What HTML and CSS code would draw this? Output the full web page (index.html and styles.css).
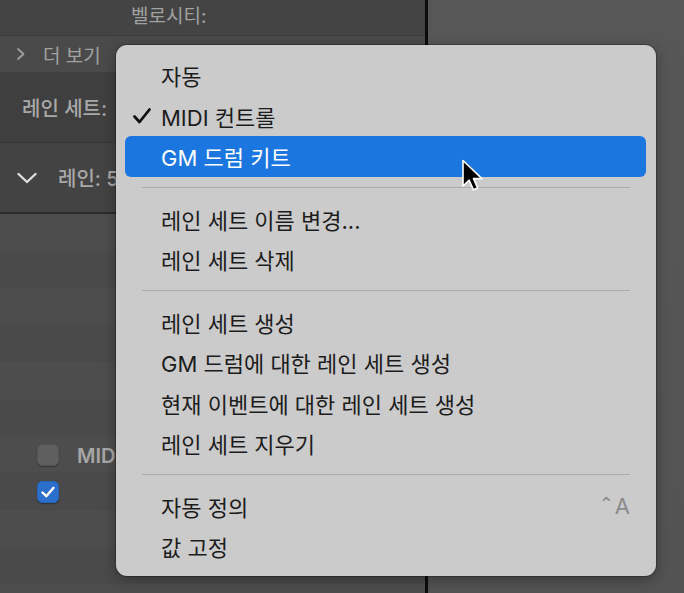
FILE: index.html
```html
<!DOCTYPE html>
<html lang="ko">
<head>
<meta charset="utf-8">
<link rel="stylesheet" href="styles.css">
</head>
<body>
<div class="screen">
  <div class="left">
    <div class="row r-top"><span class="lbl velo">벨로시티:</span></div>
    <div class="row r-more">
      <svg class="chev-r" width="10" height="14" viewBox="0 0 10 14"><path d="M2 2 L7.5 7 L2 12" fill="none" stroke="#a0a0a0" stroke-width="1.8" stroke-linecap="round" stroke-linejoin="round"/></svg>
      <span class="lbl">더 보기</span>
    </div>
    <div class="row r-set"><span class="lbl strong">레인 세트:</span></div>
    <div class="row r-lane">
      <svg class="chev-d" width="22" height="14" viewBox="0 0 22 14"><path d="M2.5 3 L11 11 L19.5 3" fill="none" stroke="#dedede" stroke-width="2.4" stroke-linecap="round" stroke-linejoin="round"/></svg>
      <span class="lbl strong">레인: 5</span>
    </div>
    <div class="lanes">
      <div class="stripe a"></div>
      <div class="stripe b"></div>
      <div class="stripe a"></div>
      <div class="stripe b"></div>
      <div class="stripe a"></div>
      <div class="stripe b"></div>
      <div class="stripe a"><span class="cb"></span><span class="lbl mid">MIDI 컨트롤</span></div>
      <div class="stripe b"><span class="cb on"><svg width="16" height="14" viewBox="0 0 16 14"><path d="M2.5 7.5 L6.3 11.2 L13.5 2.8" fill="none" stroke="#fff" stroke-width="2.4" stroke-linecap="round" stroke-linejoin="round"/></svg></span></div>
      <div class="stripe a"></div>
      <div class="stripe b"></div>
      <div class="stripe a"></div>
    </div>
  </div>
  <div class="divider"></div>
  <div class="right"></div>

  <div class="menu">
    <div class="item">자동</div>
    <div class="item checked"><svg class="check" width="20" height="18" viewBox="0 0 20 18"><path d="M2.5 9.5 L7.5 15 L17.5 2.5" fill="none" stroke="#111" stroke-width="2.8" stroke-linecap="round" stroke-linejoin="round"/></svg>MIDI 컨트롤</div>
    <div class="item active">GM 드럼 키트</div>
    <div class="sep"></div>
    <div class="item">레인 세트 이름 변경...</div>
    <div class="item">레인 세트 삭제</div>
    <div class="sep"></div>
    <div class="item">레인 세트 생성</div>
    <div class="item">GM 드럼에 대한 레인 세트 생성</div>
    <div class="item">현재 이벤트에 대한 레인 세트 생성</div>
    <div class="item">레인 세트 지우기</div>
    <div class="sep"></div>
    <div class="item">자동 정의<span class="key"><span class="ctl">⌃</span>A</span></div>
    <div class="item">값 고정</div>
  </div>

  <svg class="cursor" width="24" height="36" viewBox="0 0 24 36"><path d="M2 1.5 L2 27 L8.2 21.2 L12.4 30.8 L16.6 29 L12.5 19.6 L21 19.6 Z" fill="#000" stroke="#fff" stroke-width="1.6" stroke-linejoin="round"/></svg>
</div>
</body>
</html>
```
FILE: styles.css
```css
html, body {
  margin: 0;
  padding: 0;
  background: #555555;
}
.screen {
  position: relative;
  width: 684px;
  height: 593px;
  overflow: hidden;
  display: flex;
  font-family: "Inter", "Noto Sans CJK KR", sans-serif;
  background: #555555;
}
.left {
  width: 425px;
  flex: none;
  display: flex;
  flex-direction: column;
  background: #4c4c4c;
}
.row {
  flex: none;
  display: flex;
  align-items: center;
  box-sizing: border-box;
}
.lbl {
  color: #a2a2a2;
  font-size: 19px;
  white-space: nowrap;
}
.lbl.strong {
  font-size: 20px;
  font-weight: 500;
  color: #a8a8a8;
}
.r-top {
  height: 36px;
  background: #444444;
  padding-left: 131px;
  border-bottom: 1px solid #3c3c3c;
}
.r-top .lbl { margin-top: -6px; }
.r-more {
  height: 36px;
  background: #4a4a4a;
  padding-left: 16px;
}
.r-more .lbl { margin-left: 17px; }
.r-set {
  height: 71px;
  background: #3f3f3f;
  padding-left: 22px;
  border-bottom: 1px solid #363636;
}
.r-lane {
  height: 71px;
  background: #434343;
  padding-left: 16px;
  border-bottom: 2px solid #2b2b2b;
}
.r-lane .lbl { margin-left: 20px; }
.lanes {
  flex: none;
  display: flex;
  flex-direction: column;
}
.stripe {
  height: 37px;
  flex: none;
  display: flex;
  align-items: center;
  padding-left: 37px;
}
.stripe.a { background: #4d4d4d; }
.stripe.b { background: #4a4a4a; }
.cb {
  width: 22px;
  height: 22px;
  flex: none;
  box-sizing: border-box;
  border-radius: 5px;
  background: #5f5f5f;
  border: 1px solid #545454;
  box-shadow: 0 1px 1px rgba(0,0,0,0.35);
  display: flex;
  align-items: center;
  justify-content: center;
}
.cb.on {
  background: #2b6fcb;
  border-color: #2462b5;
}
.lbl.mid {
  margin-left: 18px;
  font-size: 20px;
  font-weight: 600;
  color: #a6a6a6;
}
.divider {
  width: 3px;
  flex: none;
  background: #0c0c0c;
}
.right {
  flex: 1;
  background: linear-gradient(#575757, #535353);
}
.menu {
  position: absolute;
  left: 116px;
  top: 45px;
  width: 540px;
  height: 531px;
  box-sizing: border-box;
  padding: 10px 10px 0 9px;
  background: #cbcbcb;
  border-radius: 11px;
  box-shadow: 0 0 0 1px rgba(0,0,0,0.22), 0 4px 14px rgba(0,0,0,0.3);
}
.item {
  position: relative;
  height: 40.5px;
  display: flex;
  align-items: center;
  padding-left: 36px;
  padding-right: 16px;
  font-size: 22px;
  color: #1c1c1c;
  border-radius: 6px;
  white-space: nowrap;
}
.item.active {
  background: #1b76df;
  color: #ffffff;
}
.check {
  position: absolute;
  left: 7px;
  top: 11px;
}
.key {
  margin-left: auto;
  color: #8a8a8a;
  font-size: 22px;
  display: flex;
  align-items: center;
}
.ctl {
  font-family: "DejaVu Sans", sans-serif;
  font-size: 18px;
  margin-right: 1px;
  position: relative;
  top: -2px;
}
.sep {
  height: 1px;
  margin: 10px 16px 11px 17px;
  background: #ababab;
}
.cursor {
  position: absolute;
  left: 461px;
  top: 159px;
}
```
